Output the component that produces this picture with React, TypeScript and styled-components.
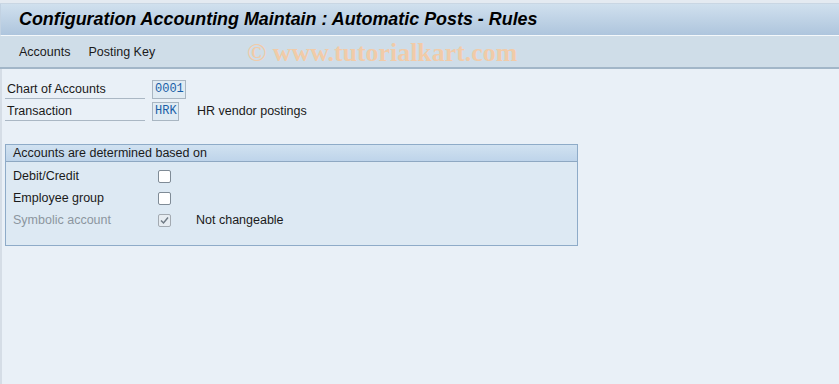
import styled, { createGlobalStyle } from 'styled-components';

const Global = createGlobalStyle`
    html, body {
        margin: 0;
        padding: 0;
        width: 839px;
        height: 384px;
        overflow: hidden;
        background: #e9f0f7;
        font-family: 'Liberation Sans', Arial, sans-serif;
    }
`;

const Screen = styled.div`
    width: 839px;
    height: 384px;
    display: flex;
    flex-direction: column;
    background: #e9f0f7;
`;

const TopStrip = styled.div`
    height: 3px;
    background: #e4eaf1;
    border-bottom: 1px solid #c9d6e3;
`;

const TitleBar = styled.div`
    height: 31px;
    padding-left: 18px;
    display: flex;
    align-items: center;
    background: linear-gradient(#d0e0ee, #aec5dd);
    border-bottom: 1px solid #f4f8fb;
    border-left: 1px solid #c2d2e2;
`;

const Title = styled.h1`
    margin: 0;
    font-size: 17.9px;
    font-weight: bold;
    font-style: italic;
    color: #000;
`;

const Toolbar = styled.div`
    height: 31px;
    display: flex;
    align-items: center;
    gap: 18px;
    padding-left: 19px;
    background: #cfdde8;
    border-bottom: 2px solid #a2b6c8;
    position: relative;
`;

const ToolItem = styled.span`
    font-size: 12.5px;
    color: #1a1a1a;
`;

const Watermark = styled.span`
    position: absolute;
    left: 247px;
    top: 2px;
    font-family: 'Liberation Serif', 'Times New Roman', serif;
    font-weight: bold;
    font-size: 25.9px;
    color: #f1cba8;
`;

const Body = styled.div`
    flex: 1;
    padding: 9px 0 0 3px;
    border-left: 2px solid #d5dde6;
    display: flex;
    flex-direction: column;
`;

const FieldRow = styled.div`
    display: flex;
    align-items: center;
    height: 22px;
`;

const Label = styled.div<{ $width: number }>`
    width: ${p => p.$width}px;
    height: 19px;
    padding-left: 2px;
    box-sizing: border-box;
    font-size: 12.5px;
    line-height: 18px;
    color: #1a1a1a;
    border-bottom: 1px solid #aab7c4;
`;

const Input = styled.div<{ $width: number }>`
    width: ${p => p.$width}px;
    height: 19px;
    box-sizing: border-box;
    margin-left: 7px;
    border: 1px solid #a9b6c2;
    background: #e0ebf3;
    font-family: 'Liberation Mono', 'Courier New', monospace;
    font-size: 12px;
    line-height: 17px;
    padding-left: 2px;
    color: #1a5fa8;
`;

const Hint = styled.span`
    margin-left: 18px;
    font-size: 12.5px;
    color: #1a1a1a;
`;

const Group = styled.section`
    margin-top: 22px;
    width: 573px;
    height: 102px;
    box-sizing: border-box;
    border: 1px solid #8eabc8;
    background: #dde9f3;
    display: flex;
    flex-direction: column;
`;

const GroupHead = styled.div`
    height: 16px;
    padding-left: 7px;
    font-size: 12.5px;
    line-height: 16px;
    color: #1a1a1a;
    background: linear-gradient(#d1e2f1, #bed4ea);
    border-bottom: 1px solid #8ea8c2;
`;

const GroupBody = styled.div`
    padding: 3px 0 0 7px;
    display: flex;
    flex-direction: column;
`;

const CheckRow = styled.div`
    display: flex;
    align-items: center;
    height: 22px;
`;

const CheckLabel = styled.span<{ $disabled?: boolean }>`
    width: 145px;
    font-size: 12.5px;
    color: ${p => (p.$disabled ? '#8c969f' : '#1a1a1a')};
`;

const Box = styled.span<{ $disabled?: boolean }>`
    width: 13px;
    height: 13px;
    box-sizing: border-box;
    border: 1px solid ${p => (p.$disabled ? '#a3aab1' : '#7f8b96')};
    border-radius: 2px;
    background: ${p => (p.$disabled ? '#e6ecf1' : '#fff')};
    display: flex;
    align-items: center;
    justify-content: center;
`;

const CheckNote = styled.span`
    margin-left: 25px;
    font-size: 12.5px;
    color: #1a1a1a;
`;

const Check = () => (
    <svg width="9" height="9" viewBox="0 0 9 9">
        <path d="M1 4.5 L3.5 7 L8 1.5" fill="none" stroke="#6f7a84" strokeWidth="1.5" />
    </svg>
);

export default function App() {
    return (
        <>
            <Global />
            <Screen>
                <TopStrip />
                <TitleBar>
                    <Title>Configuration Accounting Maintain : Automatic Posts - Rules</Title>
                </TitleBar>
                <Toolbar>
                    <ToolItem>Accounts</ToolItem>
                    <ToolItem>Posting Key</ToolItem>
                    <Watermark>© www.tutorialkart.com</Watermark>
                </Toolbar>
                <Body>
                    <FieldRow>
                        <Label $width={140}>Chart of Accounts</Label>
                        <Input $width={34}>0001</Input>
                    </FieldRow>
                    <FieldRow>
                        <Label $width={140}>Transaction</Label>
                        <Input $width={27}>HRK</Input>
                        <Hint>HR vendor postings</Hint>
                    </FieldRow>
                    <Group>
                        <GroupHead>Accounts are determined based on</GroupHead>
                        <GroupBody>
                            <CheckRow>
                                <CheckLabel>Debit/Credit</CheckLabel>
                                <Box />
                            </CheckRow>
                            <CheckRow>
                                <CheckLabel>Employee group</CheckLabel>
                                <Box />
                            </CheckRow>
                            <CheckRow>
                                <CheckLabel $disabled>Symbolic account</CheckLabel>
                                <Box $disabled>
                                    <Check />
                                </Box>
                                <CheckNote>Not changeable</CheckNote>
                            </CheckRow>
                        </GroupBody>
                    </Group>
                </Body>
            </Screen>
        </>
    );
}
